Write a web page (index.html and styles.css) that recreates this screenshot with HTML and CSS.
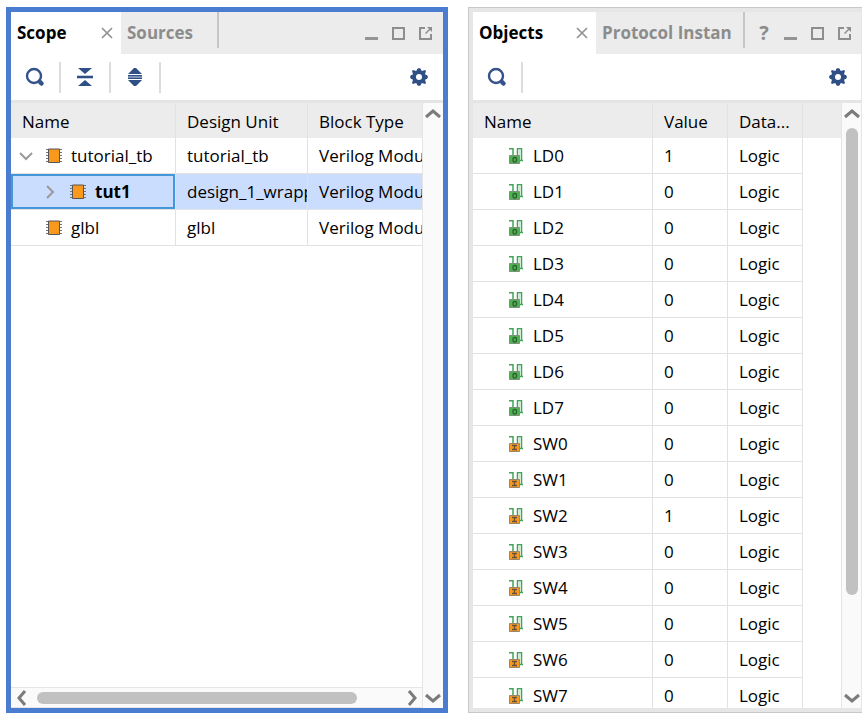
FILE: index.html
```html
<!DOCTYPE html>
<html lang="en">
<head>
<meta charset="utf-8">
<title>Simulation</title>
<link rel="stylesheet" href="styles.css">
</head>
<body>
<svg class="defs" aria-hidden="true">
  <symbol id="search" viewBox="0 0 20 20"><circle cx="9" cy="9" r="7" fill="none" stroke="#36528a" stroke-width="2.400"/><path d="M15 15l1.500 1.500" stroke="#36528a" stroke-width="4.500" stroke-linecap="round"/></symbol>
  <symbol id="gear" viewBox="0 0 18 18"><g fill="#2f4f87"><circle cx="9" cy="9" r="7"/><path d="M7 1l2-1 2 1v16l-2 1-2-1zM1 7h16l1 2-1 2H1L0 9zM2 3l1-1 3 1 9 9 1 3-1 1-3-1-9-9zM16 3l-1-1-3 1-9 9-1 3 1 1 3-1 9-9z"/></g><circle cx="9" cy="9" r="3" fill="#fff"/></symbol>
  <symbol id="collapse" viewBox="0 0 18 18"><path d="M2 0h14L9 6zM2 18h14L9 12z" fill="#2f4f87"/><path d="M1 7h16v4H1z" fill="#c3cfdf"/><path d="M1 8h16v2H1z" fill="#2f4f87"/></symbol>
  <symbol id="expand" viewBox="0 0 14 18"><path d="M0 6L6 0h2l6 6zM0 12l6 6h2l6-6zM0 7h14v4H0z" fill="#2f4f87"/><path d="M0 8.500h14v1H0z" fill="#c9d5e4"/></symbol>
  <symbol id="close" viewBox="0 0 12 12"><path d="M1 1l10 10M11 1L1 11" stroke="#929292" stroke-width="1.700"/></symbol>
  <symbol id="min" viewBox="0 0 14 14"><path d="M0 11h13v3H0z" fill="#949494"/></symbol>
  <symbol id="max" viewBox="0 0 14 14"><path d="M1 2h11v11H1z" fill="none" stroke="#8e8e8e" stroke-width="2"/></symbol>
  <symbol id="float" viewBox="0 0 14 14"><path d="M6 2H1v11h11V8" fill="none" stroke="#8e8e8e" stroke-width="2"/><path d="M8 1h5v5zM6 7l5-5 1 1-5 5z" fill="#8e8e8e"/></symbol>
  <symbol id="chip" viewBox="0 0 16 16"><path d="M0 1.500h16M0 4.500h16M0 7.500h16M0 10.500h16M0 13.500h16" stroke="#777"/><path d="M2.500 1h11v13.500h-11z" fill="#f8981d" stroke="#555"/></symbol>
  <symbol id="chev" viewBox="0 0 14 14"><path d="M1 4l6 6 6-6" fill="none" stroke="#999" stroke-width="2"/></symbol>
  <symbol id="arrow" viewBox="0 0 16 10"><path d="M1 8l7-6 7 6" fill="none" stroke="#7b7b7b" stroke-width="3"/></symbol>
  <symbol id="out" viewBox="0 0 14 16"><path d="M0 .7h4V8M12.500 12.500V.7H8.500V8" fill="none" stroke="#41a45a" stroke-width="1.500"/><path d="M9 1.500h3V12H9z" fill="#cfead5"/><path d="M11 12.500h3" stroke="#41a45a" stroke-width="1.500"/><path d="M.5 7.500h10v8H.5z" fill="#4db34d" stroke="#7c927c"/><rect x="4" y="9.500" width="3.500" height="4.500" rx="1.500" fill="none" stroke="#315b38" stroke-width="1.300"/></symbol>
  <symbol id="in" viewBox="0 0 14 16"><path d="M0 .7h4V8M12.500 12.500V.7H8.500V8" fill="none" stroke="#41a45a" stroke-width="1.500"/><path d="M9 1.500h3V12H9z" fill="#cfead5"/><path d="M11 12.500h3" stroke="#41a45a" stroke-width="1.500"/><path d="M.5 7.500h10v8H.5z" fill="#f8981d" stroke="#9a8768"/><path d="M3 9.500h5M3 13.500h5M5.500 9.500v4" stroke="#655039" stroke-width="1.300"/></symbol>
</svg>
<main class="workspace">
  <section class="panel active" aria-label="Scope">
    <header class="tabs">
      <div class="tab current scope-tab"><button class="tab-name">Scope</button><button class="icon-btn" aria-label="Close Scope"><svg class="i12"><use href="#close"/></svg></button></div>
      <div class="tab sources-tab"><button class="tab-name">Sources</button></div>
      <span class="tab-end"></span>
      <div class="window-tools">
        <button class="icon-btn" aria-label="Minimize"><svg class="i14"><use href="#min"/></svg></button>
        <button class="icon-btn" aria-label="Maximize"><svg class="i14"><use href="#max"/></svg></button>
        <button class="icon-btn" aria-label="Float"><svg class="i14"><use href="#float"/></svg></button>
      </div>
    </header>
    <div class="toolbar">
      <button class="tool" aria-label="Search"><svg class="i20"><use href="#search"/></svg></button>
      <button class="tool" aria-label="Collapse all"><svg class="i18"><use href="#collapse"/></svg></button>
      <button class="tool" aria-label="Expand all"><svg class="i18"><use href="#expand"/></svg></button>
      <button class="icon-btn settings" aria-label="Settings"><svg class="i18"><use href="#gear"/></svg></button>
    </div>
    <div class="body">
      <div class="view">
        <div class="clip">
          <table class="scope-table">
            <colgroup><col class="c-scope"><col class="c-unit"><col></colgroup>
            <thead><tr><th>Name</th><th>Design Unit</th><th>Block Type</th></tr></thead>
            <tbody>
              <tr><td><div class="node"><svg class="i14"><use href="#chev"/></svg><svg class="i16"><use href="#chip"/></svg>tutorial_tb</div></td><td>tutorial_tb</td><td>Verilog Modu</td></tr>
              <tr class="selected"><td><div class="node child"><svg class="i14 closed"><use href="#chev"/></svg><svg class="i16"><use href="#chip"/></svg>tut1</div></td><td>design_1_wrapp</td><td>Verilog Modu</td></tr>
              <tr><td><div class="node leaf"><svg class="i16"><use href="#chip"/></svg>glbl</div></td><td>glbl</td><td>Verilog Modu</td></tr>
            </tbody>
          </table>
        </div>
        <div class="hbar">
          <button class="icon-btn" aria-label="Scroll left"><svg class="arrow left"><use href="#arrow"/></svg></button>
          <div class="track"><div class="thumb"></div></div>
          <button class="icon-btn" aria-label="Scroll right"><svg class="arrow right"><use href="#arrow"/></svg></button>
        </div>
      </div>
      <div class="vbar">
        <button class="icon-btn" aria-label="Scroll up"><svg class="arrow"><use href="#arrow"/></svg></button>
        <button class="icon-btn" aria-label="Scroll down"><svg class="arrow down"><use href="#arrow"/></svg></button>
      </div>
    </div>
  </section>
  <section class="panel docked" aria-label="Objects">
    <header class="tabs">
      <div class="tab current objects-tab"><button class="tab-name">Objects</button><button class="icon-btn" aria-label="Close Objects"><svg class="i12"><use href="#close"/></svg></button></div>
      <div class="tab protocol-tab"><button class="tab-name">Protocol Instan</button></div>
      <span class="tab-end"></span>
      <div class="window-tools">
        <button class="icon-btn help" aria-label="Help">?</button>
        <button class="icon-btn" aria-label="Minimize"><svg class="i14"><use href="#min"/></svg></button>
        <button class="icon-btn" aria-label="Maximize"><svg class="i14"><use href="#max"/></svg></button>
        <button class="icon-btn" aria-label="Float"><svg class="i14"><use href="#float"/></svg></button>
      </div>
    </header>
    <div class="toolbar">
      <button class="tool" aria-label="Search"><svg class="i20"><use href="#search"/></svg></button>
      <button class="icon-btn settings" aria-label="Settings"><svg class="i18"><use href="#gear"/></svg></button>
    </div>
    <div class="body">
      <div class="view">
        <div class="clip">
          <table class="objects-table">
            <colgroup><col class="c-object"><col class="c-value"><col class="c-value"><col></colgroup>
            <thead><tr><th>Name</th><th>Value</th><th>Data...</th><th></th></tr></thead>
            <tbody>
              <tr><td><div class="signal"><svg class="sig"><use href="#out"/></svg>LD0</div></td><td>1</td><td>Logic</td><td></td></tr>
              <tr><td><div class="signal"><svg class="sig"><use href="#out"/></svg>LD1</div></td><td>0</td><td>Logic</td><td></td></tr>
              <tr><td><div class="signal"><svg class="sig"><use href="#out"/></svg>LD2</div></td><td>0</td><td>Logic</td><td></td></tr>
              <tr><td><div class="signal"><svg class="sig"><use href="#out"/></svg>LD3</div></td><td>0</td><td>Logic</td><td></td></tr>
              <tr><td><div class="signal"><svg class="sig"><use href="#out"/></svg>LD4</div></td><td>0</td><td>Logic</td><td></td></tr>
              <tr><td><div class="signal"><svg class="sig"><use href="#out"/></svg>LD5</div></td><td>0</td><td>Logic</td><td></td></tr>
              <tr><td><div class="signal"><svg class="sig"><use href="#out"/></svg>LD6</div></td><td>0</td><td>Logic</td><td></td></tr>
              <tr><td><div class="signal"><svg class="sig"><use href="#out"/></svg>LD7</div></td><td>0</td><td>Logic</td><td></td></tr>
              <tr><td><div class="signal"><svg class="sig"><use href="#in"/></svg>SW0</div></td><td>0</td><td>Logic</td><td></td></tr>
              <tr><td><div class="signal"><svg class="sig"><use href="#in"/></svg>SW1</div></td><td>0</td><td>Logic</td><td></td></tr>
              <tr><td><div class="signal"><svg class="sig"><use href="#in"/></svg>SW2</div></td><td>1</td><td>Logic</td><td></td></tr>
              <tr><td><div class="signal"><svg class="sig"><use href="#in"/></svg>SW3</div></td><td>0</td><td>Logic</td><td></td></tr>
              <tr><td><div class="signal"><svg class="sig"><use href="#in"/></svg>SW4</div></td><td>0</td><td>Logic</td><td></td></tr>
              <tr><td><div class="signal"><svg class="sig"><use href="#in"/></svg>SW5</div></td><td>0</td><td>Logic</td><td></td></tr>
              <tr><td><div class="signal"><svg class="sig"><use href="#in"/></svg>SW6</div></td><td>0</td><td>Logic</td><td></td></tr>
              <tr><td><div class="signal"><svg class="sig"><use href="#in"/></svg>SW7</div></td><td>0</td><td>Logic</td><td></td></tr>
            </tbody>
          </table>
        </div>
      </div>
      <div class="vbar">
        <button class="icon-btn" aria-label="Scroll up"><svg class="arrow"><use href="#arrow"/></svg></button>
        <div class="track"><div class="thumb"></div></div>
        <button class="icon-btn" aria-label="Scroll down"><svg class="arrow down"><use href="#arrow"/></svg></button>
      </div>
    </div>
  </section>
</main>
</body>
</html>
```
FILE: styles.css
```css
* { box-sizing: border-box; }
body {
  margin: 0;
  background: #fff;
  color: #000;
  font: 17px/24px "Open Sans", "Noto Sans", sans-serif;
}
.defs { position: absolute; width: 0; height: 0; }
svg { display: block; flex: none; }
button { padding: 0; border: 0; background: none; color: inherit; font: inherit; }

.workspace {
  display: grid;
  grid-template-columns: 442fr 394fr;
  gap: 20px;
  height: 100vh;
  padding: 7px 0 7px 6px;
}
.panel { display: flex; flex-direction: column; min-width: 0; min-height: 0; background: #fff; }
.active { border: 5px solid #4a7ccf; }
.docked {
  border: 1px solid #c8c8c8;
  border-right: 0;
  padding: 4px 1px 4px 4px;
  background: #e6e6e6;
}

.tabs { display: flex; flex: none; height: 42px; background: #ececec; }
.tab { display: flex; align-items: center; min-width: 0; padding: 0 6px; color: #8c8c8c; }
.tab-name { font-weight: 700; white-space: nowrap; }
.current { justify-content: space-between; background: #fff; color: #000; }
.scope-tab { width: 110px; padding-right: 8px; }
.objects-tab { width: 123px; padding-right: 8px; }
.sources-tab { width: 96px; }
.protocol-tab { width: 147px; }
.tab-end { width: 2px; height: 36px; background: #c6c6c6; }
.window-tools { display: flex; align-items: center; gap: 13px; margin-left: auto; padding-right: 10px; color: #8c8c8c; }
.docked .window-tools { padding-right: 9px; }
.help { width: 14px; font-size: 20px; font-weight: 700; }

.toolbar { display: flex; flex: none; align-items: center; height: 46px; background: #fff; }
.tool {
  display: flex;
  align-items: center;
  justify-content: center;
  width: 50px;
  height: 31px;
  border-right: 2px solid #dcdcdc;
}
.settings { margin-left: auto; padding-right: 15px; }
.docked .settings { padding-right: 14px; }

.body { display: flex; flex: 1; min-height: 0; border-top: 3px solid #e5e5e5; background: #fff; }
.view { display: flex; flex: 1; flex-direction: column; min-width: 0; }
.clip { flex: 1; min-height: 0; overflow: hidden; }
table { width: 100%; table-layout: fixed; border-collapse: separate; border-spacing: 0; }
th, td {
  height: 36px;
  padding: 0 0 0 11px;
  overflow: hidden;
  border-right: 1px solid #e2e2e2;
  border-bottom: 1px solid #e2e2e2;
  font-weight: 400;
  text-align: left;
  text-overflow: clip;
  white-space: nowrap;
}
th { height: 35px; padding-top: 2px; border-bottom: 0; background: #ececec; }
.scope-table th:last-child, .scope-table td:last-child,
.objects-table th:last-child, .objects-table td:last-child { border-right: 0; }
.objects-table td:last-child { border-bottom: 0; }
.c-scope { width: 165px; }
.c-unit { width: 132px; }
.c-object { width: 180px; }
.c-value { width: 75px; }
td:first-child { padding-left: 0; }
.selected td { background: #cbddff; }
.selected td:first-child { box-shadow: inset 0 0 0 2px #4497d8; font-weight: 700; }
.node { display: flex; align-items: center; gap: 9px; padding-left: 8px; }
.node .i14 { margin-right: 4px; }
.child { padding-left: 32px; }
.leaf { padding-left: 35px; }
.signal { display: flex; align-items: center; gap: 10px; padding-left: 36px; }

.i12 { width: 12px; height: 12px; }
.i14 { width: 14px; height: 14px; }
.i16 { width: 16px; height: 16px; }
.i18 { width: 18px; height: 18px; }
.i20 { width: 20px; height: 20px; }
.sig { width: 14px; height: 16px; }
.arrow { width: 16px; height: 10px; }
.closed { transform: rotate(-90deg); }
.down { transform: rotate(180deg); }
.left { transform: rotate(-90deg); }
.right { transform: rotate(90deg); }

.vbar {
  display: flex;
  flex: none;
  flex-direction: column;
  align-items: center;
  justify-content: space-between;
  width: 21px;
  padding: 6px 0 5px;
  border-left: 1px solid #e5e5e5;
  background: #fafafa;
}
.docked .vbar { width: 20px; }
.hbar {
  display: flex;
  flex: none;
  align-items: center;
  gap: 7px;
  height: 21px;
  padding: 0 2px 0 3px;
  border-top: 1px solid #e5e5e5;
  border-bottom: 1px solid #e5e5e5;
  background: #fafafa;
}
.track { flex: 1; }
.thumb { border-radius: 6px; background: #c1c1c1; }
.hbar .thumb { width: 89%; height: 12px; }
.vbar .track { display: flex; padding: 9px 0; }
.vbar .thumb { width: 12px; height: 84%; }
```
